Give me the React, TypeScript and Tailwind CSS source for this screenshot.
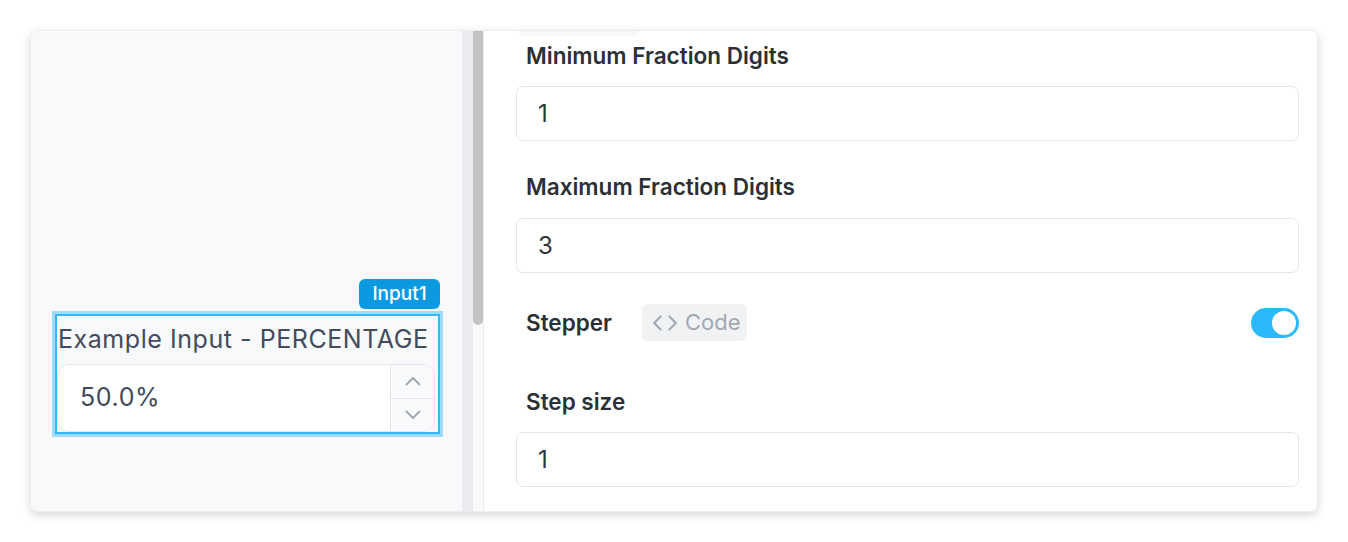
import React from "react";
import { Code } from "lucide-react";

const font = { fontFamily: "Inter, 'Noto Sans', sans-serif" };

function Field({ value }: { value: string }) {
  return (
    <div className="h-[55px] w-full rounded-[7px] border border-[#e3e5e9] bg-white pl-[21px] flex items-center text-[24px] text-[#30353a]">
      {value}
    </div>
  );
}

function Label({ children }: { children: React.ReactNode }) {
  return (
    <div className="h-[24px] pl-[10px] text-[22.5px] leading-[24px] font-semibold text-[#2b3035] whitespace-nowrap">
      {children}
    </div>
  );
}

function Chevron({ up }: { up?: boolean }) {
  return (
    <svg width="16" height="10" viewBox="0 0 16 10" fill="none">
      <polyline
        points={up ? "1.5,8.5 8,2 14.5,8.5" : "1.5,1.5 8,8 14.5,1.5"}
        stroke="#a0a6b1"
        strokeWidth="1.8"
        strokeLinecap="round"
        strokeLinejoin="round"
      />
    </svg>
  );
}

export default function App() {
  return (
    <div className="w-[1348px] h-[542px] bg-white pt-[30px] pl-[30px]" style={font}>
      <div className="w-[1288px] h-[482px] rounded-[8px] bg-white shadow-[0_3px_10px_rgba(0,0,0,0.16)] border border-[#eeeeee] overflow-hidden flex">
        {/* left canvas */}
        <div className="w-[431px] h-full bg-[#f8f9fb] pt-[248px] pl-[21px]">
          <div className="w-[391px]">
            <div className="flex justify-end pr-[3px]">
              <div className="h-[30px] w-[81px] rounded-[6px] bg-[#0b9ae0] text-white text-[19px] font-medium flex items-center justify-center">
                Input1
              </div>
            </div>
            <div className="mt-[2px] p-[3px] bg-[#9fdbfd]">
              <div className="border-2 border-[#33b9f6] bg-[#f8f9fb]">
                <div className="h-[48px] pl-[1px] flex items-center text-[25px] tracking-[0.55px] text-[#434b5c] whitespace-nowrap">
                  Example Input - PERCENTAGE
                </div>
                <div className="h-[68px] w-[378px] rounded-[12px] border border-[#e3e5e9] bg-white flex overflow-hidden">
                  <div className="flex-1 pl-[22px] flex items-center text-[25px] tracking-[0.6px] text-[#424a5a]">50.0%</div>
                  <div className="w-[44px] border-l border-[#e3e5e9] bg-[#f9fafb] flex flex-col">
                    <div className="flex-1 flex items-center justify-center border-b border-[#e3e5e9]">
                      <Chevron up />
                    </div>
                    <div className="flex-1 flex items-center justify-center">
                      <Chevron />
                    </div>
                  </div>
                </div>
              </div>
            </div>
          </div>
        </div>
        {/* divider track */}
        <div className="w-[10px] h-full bg-[#e9ebef]" />
        {/* scrollbar */}
        <div className="w-[12px] h-full bg-[#fafafa] border-x border-[#ececec] flex flex-col">
          <div className="h-[294px] w-full bg-[#c2c2c2] rounded-b-[5px]" />
        </div>
        {/* right panel */}
        <div className="flex-1 h-full bg-white pl-[32px] pr-[18px]">
          <div className="h-[5px] w-[120px] ml-[3px] rounded-b-[6px] bg-[#f6f7f8]" />
          <div className="mt-[8px]">
            <Label>Minimum Fraction Digits</Label>
          </div>
          <div className="mt-[18px]">
            <Field value="1" />
          </div>
          <div className="mt-[34px]">
            <Label>Maximum Fraction Digits</Label>
          </div>
          <div className="mt-[19px]">
            <Field value="3" />
          </div>
          <div className="mt-[31px] h-[37px] flex items-center pl-[10px]">
            <div className="text-[22.5px] font-semibold text-[#2b3035]">Stepper</div>
            <div className="ml-[30px] h-[37px] w-[105px] rounded-[6px] bg-[#f1f2f4] flex items-center pl-[10px] gap-[7px]">
              <Code size={26} color="#a3a8b3" strokeWidth={2} />
              <span className="text-[22px] text-[#a3a8b3]">Code</span>
            </div>
            <div className="ml-auto h-[30px] w-[48px] rounded-full bg-[#2ab9fb] flex items-center justify-end pr-[3px]">
              <div className="h-[24px] w-[24px] rounded-full bg-white" />
            </div>
          </div>
          <div className="mt-[49px]">
            <Label>Step size</Label>
          </div>
          <div className="mt-[18px]">
            <Field value="1" />
          </div>
        </div>
      </div>
    </div>
  );
}
